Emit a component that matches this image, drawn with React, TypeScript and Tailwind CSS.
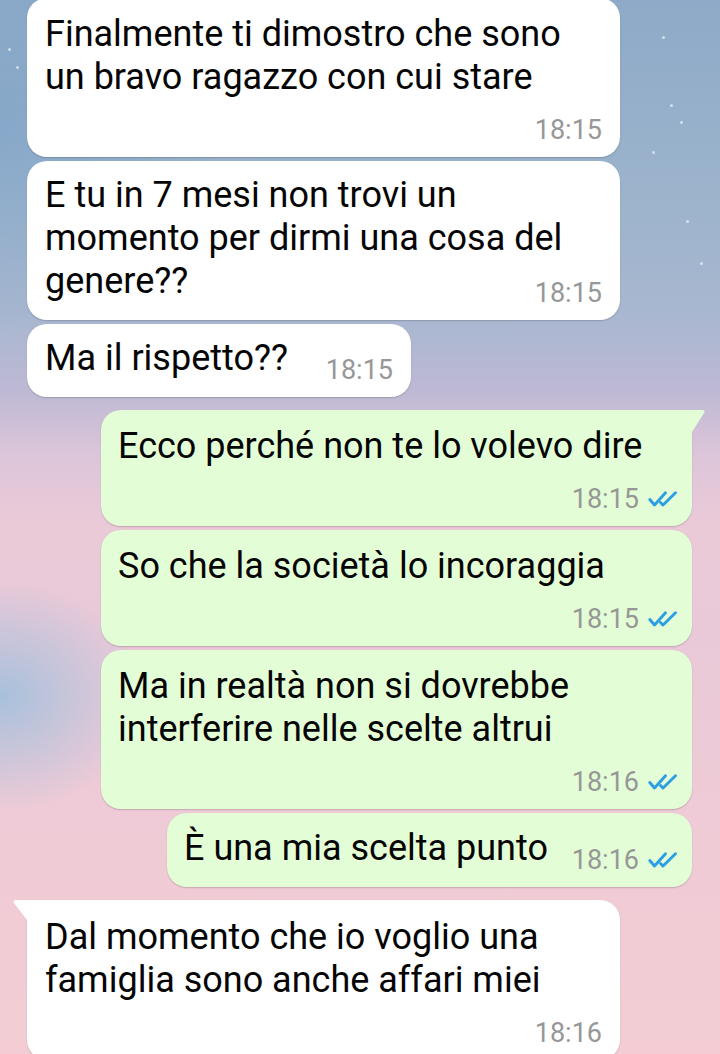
import React from "react";

type Msg = {
  side: "in" | "out";
  lines: string[];
  time: string;
  inline: boolean;
  width: string;
  gap: string;
  tail?: boolean;
  pt?: string;
};

const msgs: Msg[] = [
  { side: "in", lines: ["Finalmente ti dimostro che sono", "un bravo ragazzo con cui stare"], time: "18:15", inline: false, width: "w-[593px]", gap: "mt-0" },
  { side: "in", lines: ["E tu in 7 mesi non trovi un", "momento per dirmi una cosa del", "genere??"], time: "18:15", inline: true, width: "w-[593px]", gap: "mt-[4px]" },
  { side: "in", lines: ["Ma il rispetto??"], time: "18:15", inline: true, width: "w-[384px]", gap: "mt-[4px]" },
  { side: "out", lines: ["Ecco perché non te lo volevo dire"], time: "18:15", inline: false, width: "w-[591px]", gap: "mt-[13px]", tail: true },
  { side: "out", lines: ["So che la società lo incoraggia"], time: "18:15", inline: false, width: "w-[591px]", gap: "mt-[4px]" },
  { side: "out", lines: ["Ma in realtà non si dovrebbe", "interferire nelle scelte altrui"], time: "18:16", inline: false, width: "w-[591px]", gap: "mt-[4px]" },
  { side: "out", lines: ["È una mia scelta punto"], time: "18:16", inline: true, width: "w-[525px]", gap: "mt-[4px]", pt: "pt-[14px]" },
  { side: "in", lines: ["Dal momento che io voglio una", "famiglia sono anche affari miei"], time: "18:16", inline: false, width: "w-[593px]", gap: "mt-[13px]", tail: true, pt: "pt-[16px]" },
];

function Ticks() {
  return (
    <svg width="30" height="16" viewBox="0 0 30 16" fill="none" className="shrink-0">
      <path d="M1.8 8.5 L6.5 14 L17.5 1.8" stroke="#2c9ee3" strokeWidth="2.9" strokeLinecap="round" strokeLinejoin="round" />
      <path d="M15 14 L27.5 1.8" stroke="#2c9ee3" strokeWidth="2.9" strokeLinecap="round" />
      <path d="M12.5 11.5 L14.5 13.5" stroke="#2c9ee3" strokeWidth="2.9" strokeLinecap="round" />
    </svg>
  );
}

function Time({ m }: { m: Msg }) {
  return (
    <div className="flex items-center gap-[9px] shrink-0">
      <span className="text-[27px] leading-[30px] text-[#979797]">{m.time}</span>
      {m.side === "out" && <Ticks />}
    </div>
  );
}

function Bubble({ m }: { m: Msg }) {
  const isOut = m.side === "out";
  const bg = isOut ? "bg-[#e3fdd6]" : "bg-white";
  const align = isOut ? "self-end mr-[28px]" : "self-start ml-[27px]";
  const corner = m.tail ? (isOut ? "rounded-[20px] rounded-tr-none" : "rounded-[20px] rounded-tl-none") : "rounded-[20px]";
  const pad = isOut ? "pl-[17px] pr-[14px]" : "pl-[18px] pr-[18px]";
  const pt = m.pt ?? (m.inline ? "pt-[13px]" : "pt-[15px]");
  const pb = m.inline ? "pb-[17px]" : "pb-[12px]";
  const head = m.lines.slice(0, -1);
  const last = m.lines[m.lines.length - 1];
  return (
    <div className={`relative ${m.gap} ${align} ${m.width} ${bg} ${corner} ${pad} ${pt} ${pb} shadow-[0_1px_1.5px_rgba(0,0,0,0.18)]`}>
      {m.tail && isOut && (
        <svg width="14" height="22" viewBox="0 0 14 22" className="absolute left-full top-0">
          <path d="M0 0 H10.5 Q13.5 0 12 3 L0 22 Z" fill="#e3fdd6" />
        </svg>
      )}
      {m.tail && !isOut && (
        <svg width="15" height="20" viewBox="0 0 15 20" className="absolute right-full top-0">
          <path d="M15 0 H3.5 Q0.5 0 2 3 L15 20 Z" fill="#ffffff" />
        </svg>
      )}
      <div className="text-[36px] leading-[43px] text-[#050505]">
        {head.map((l, i) => (
          <div key={i} className="whitespace-nowrap">{l}</div>
        ))}
        {m.inline ? (
          <div className="flex items-end justify-between">
            <span className="whitespace-nowrap">{last}</span>
            <div className="mb-[-5px]">
              <Time m={m} />
            </div>
          </div>
        ) : (
          <>
            <div className="whitespace-nowrap">{last}</div>
            <div className="mt-[16px] flex justify-end">
              <Time m={m} />
            </div>
          </>
        )}
      </div>
    </div>
  );
}

const stars = [
  { x: "left-[662px]", y: "top-[36px]" },
  { x: "left-[670px]", y: "top-[104px]" },
  { x: "left-[652px]", y: "top-[151px]" },
  { x: "left-[680px]", y: "top-[121px]" },
  { x: "left-[686px]", y: "top-[220px]" },
  { x: "left-[8px]", y: "top-[48px]" },
  { x: "left-[16px]", y: "top-[66px]" },
  { x: "left-[700px]", y: "top-[262px]" },
];

export default function App() {
  return (
    <div
      className="relative w-[720px] h-[1054px] overflow-hidden font-['Roboto','Noto_Sans',sans-serif] bg-[radial-gradient(ellipse_20%_11%_at_0%_66%,rgba(164,192,220,0.95),rgba(164,192,220,0)),radial-gradient(ellipse_30%_20%_at_0%_12%,rgba(120,160,200,0.5),rgba(120,160,200,0)),linear-gradient(180deg,#8eaac8_0%,#9db4cc_20%,#a9b7d0_30%,#bdb9d4_37%,#dcc5d9_43%,#ebcad8_50%,#e9c9d8_60%,#efcbd6_80%,#f3cdd3_100%)]"
    >
      {stars.map((s, i) => (
        <div key={i} className={`absolute ${s.x} ${s.y} w-[3px] h-[3px] rounded-full bg-white/60`} />
      ))}
      <div className="relative flex flex-col -mt-[2px]">
        {msgs.map((m, i) => (
          <Bubble key={i} m={m} />
        ))}
      </div>
    </div>
  );
}
